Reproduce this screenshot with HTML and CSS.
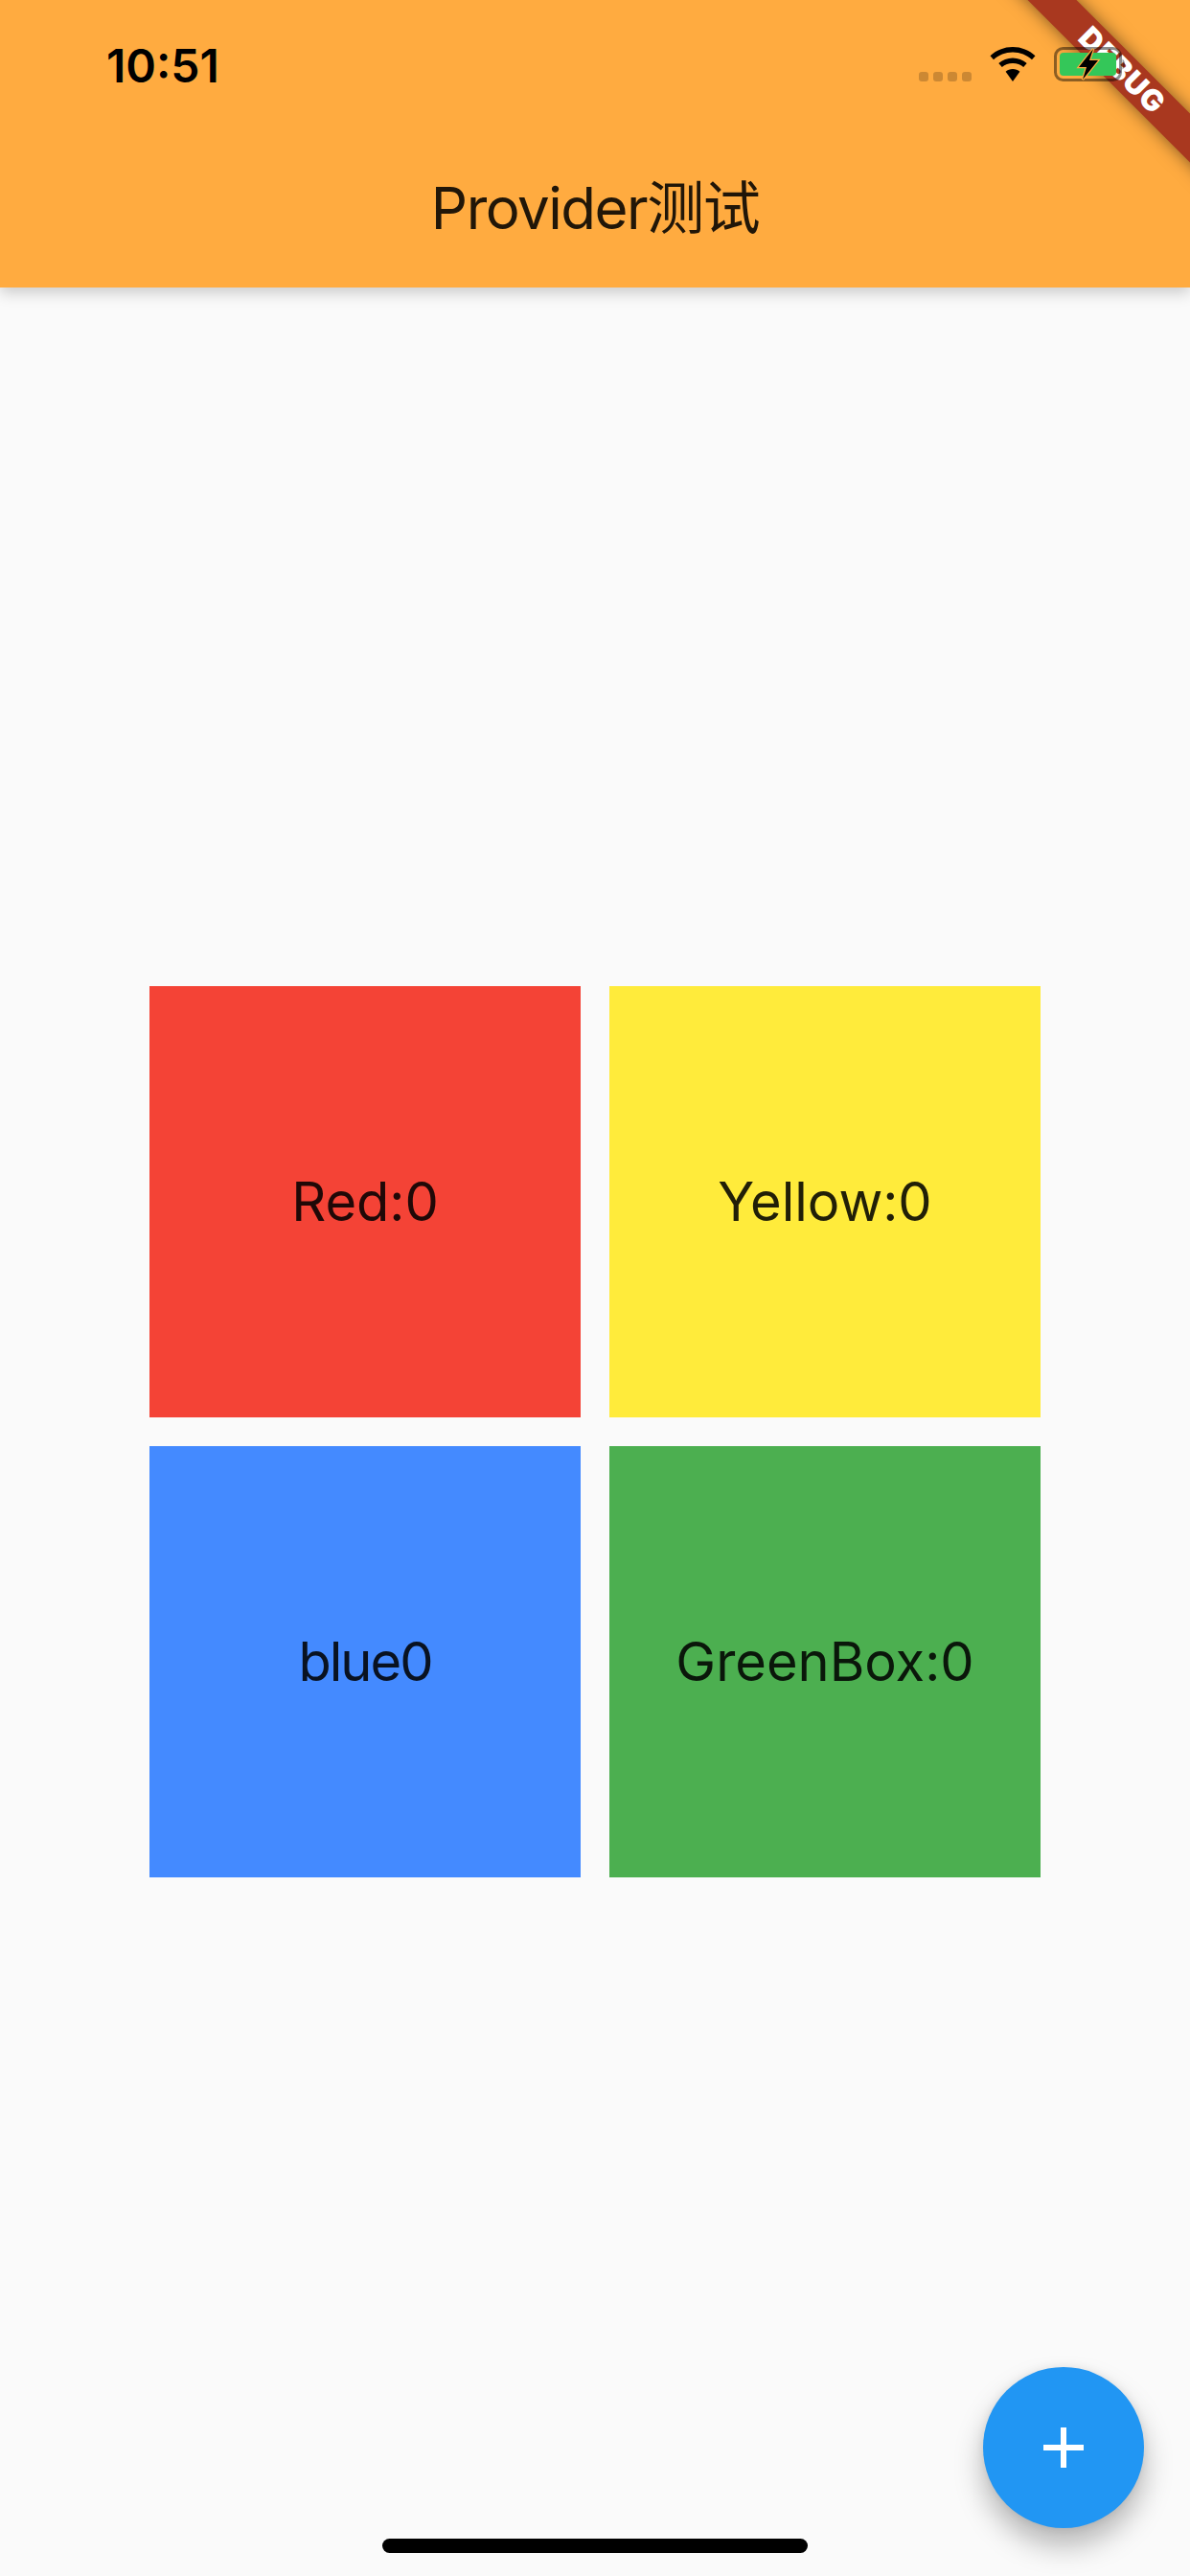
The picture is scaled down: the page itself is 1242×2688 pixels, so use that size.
FILE: index.html
```html
<!DOCTYPE html>
<html>
<head>
  <title>Provider测试</title>
  <link rel="stylesheet" href="styles.css">
</head>
<body>
  <div class="page">
    <div class="debug-banner"><span class="debug-text">DEBUG</span></div>

    <header class="app-bar">
      <div class="status-bar">
        <span class="status-time">10:51</span>
        <div class="status-icons">
          <div class="signal-dots">
            <span class="signal-dot"></span>
            <span class="signal-dot"></span>
            <span class="signal-dot"></span>
            <span class="signal-dot"></span>
          </div>
          <svg class="wifi-icon" viewBox="0 0 48 36" width="48" height="36">
            <path d="M24 0C15 0 6.800 3.400 0.500 9.200L4 13.200C9.300 8.400 16.300 5.500 24 5.500S38.700 8.400 44 13.200L47.500 9.200C41.200 3.400 33 0 24 0Z"/>
            <path d="M24 11.500C18.400 11.500 13.300 13.600 9.300 17.100L12.800 21.100C15.800 18.500 19.700 17 24 17S32.200 18.500 35.200 21.100L38.700 17.100C34.700 13.600 29.600 11.500 24 11.500Z"/>
            <path d="M24 23C21.200 23 18.600 24 16.600 25.800L24 36L31.400 25.800C29.400 24 26.800 23 24 23Z"/>
          </svg>
          <svg class="battery-icon" viewBox="0 0 74 36" width="74" height="36">
            <rect x="1.500" y="1.500" width="68" height="33" rx="8" fill="none" stroke="#000" stroke-opacity="0.45" stroke-width="3"/>
            <path d="M71.500 12.500C73 13.500 74 15.500 74 18S73 22.500 71.500 23.500Z" fill="#000" fill-opacity="0.4"/>
            <rect x="6" y="6" width="59" height="24" rx="4" fill="#34c759"/>
            <path d="M41 2L26 21H34L30 34L46 14H37Z" fill="#000" stroke="#ffab40" stroke-width="2.500" paint-order="stroke"/>
          </svg>
        </div>
      </div>
      <div class="toolbar">
        <h1 class="toolbar-title">Provider测试</h1>
      </div>
    </header>

    <main class="content">
      <div class="box-grid">
        <div class="color-box box-red">Red:0</div>
        <div class="color-box box-yellow">Yellow:0</div>
        <div class="color-box box-blue">blue0</div>
        <div class="color-box box-green">GreenBox:0</div>
      </div>
    </main>

    <button class="fab">
      <svg viewBox="0 0 42 42" width="42" height="42">
        <path d="M18 0H24V18H42V24H24V42H18V24H0V18H18Z" fill="#fff"/>
      </svg>
    </button>

    <div class="home-indicator"></div>
  </div>
</body>
</html>
```

FILE: styles.css
```css
body {
  margin: 0;
  font-family: Inter, "Noto Sans CJK SC", sans-serif;
  background-color: #fafafa;
}

.page {
  position: relative;
  display: flex;
  flex-direction: column;
  width: 1242px;
  height: 2688px;
  overflow: hidden;
}

.app-bar {
  flex: none;
  height: 300px;
  background-color: #ffab40;
  box-shadow: 0 6px 14px rgba(0, 0, 0, 0.18);
}

.status-bar {
  position: relative;
  z-index: 3;
  display: flex;
  justify-content: space-between;
  align-items: center;
  height: 132px;
  box-sizing: border-box;
  padding: 4px 68px 0 111px;
}

.status-time {
  font-size: 48px;
  font-weight: 600;
  color: #000;
}

.status-icons {
  display: flex;
  align-items: flex-end;
  gap: 19px;
  margin-top: -2px;
}

.signal-dots {
  display: flex;
  gap: 5px;
}

.signal-dot {
  width: 10px;
  height: 10px;
  border-radius: 3px;
  background-color: rgba(0, 0, 0, 0.2);
}

.toolbar {
  display: flex;
  justify-content: center;
  align-items: center;
  height: 168px;
  padding-bottom: 8px;
  box-sizing: border-box;
}

.toolbar-title {
  margin: 0;
  font-size: 60px;
  font-weight: 400;
  letter-spacing: -1.500px;
  color: rgba(0, 0, 0, 0.87);
}

.debug-banner {
  position: absolute;
  z-index: 2;
  top: 54px;
  left: 970px;
  display: flex;
  justify-content: center;
  align-items: center;
  width: 400px;
  height: 36px;
  background-color: #a9381f;
  box-shadow: 0 0 18px rgba(0, 0, 0, 0.5);
  transform: rotate(45deg);
}

.debug-text {
  margin-left: 4px;
  font-size: 31px;
  font-weight: 900;
  line-height: 36px;
  letter-spacing: 1px;
  color: #fff;
}

.content {
  flex: 1;
  display: flex;
  justify-content: center;
  align-items: center;
}

.box-grid {
  display: grid;
  grid-template-columns: 450px 450px;
  grid-auto-rows: 450px;
  gap: 30px;
}

.color-box {
  display: flex;
  justify-content: center;
  align-items: center;
  font-size: 56px;
  color: rgba(0, 0, 0, 0.87);
}

.box-red {
  background-color: #f44336;
}

.box-yellow {
  background-color: #ffeb3b;
}

.box-blue {
  background-color: #448aff;
  letter-spacing: -2px;
}

.box-green {
  background-color: #4caf50;
}

.fab {
  position: absolute;
  top: 2470px;
  left: 1026px;
  display: flex;
  justify-content: center;
  align-items: center;
  width: 168px;
  height: 168px;
  padding: 0;
  border: none;
  border-radius: 50%;
  background-color: #2196f3;
  box-shadow: 0 18px 30px rgba(0, 0, 0, 0.28), 0 0 10px rgba(0, 0, 0, 0.08);
}

.home-indicator {
  position: absolute;
  top: 2649px;
  left: 399px;
  width: 444px;
  height: 15px;
  border-radius: 8px;
  background-color: #000;
}
```
